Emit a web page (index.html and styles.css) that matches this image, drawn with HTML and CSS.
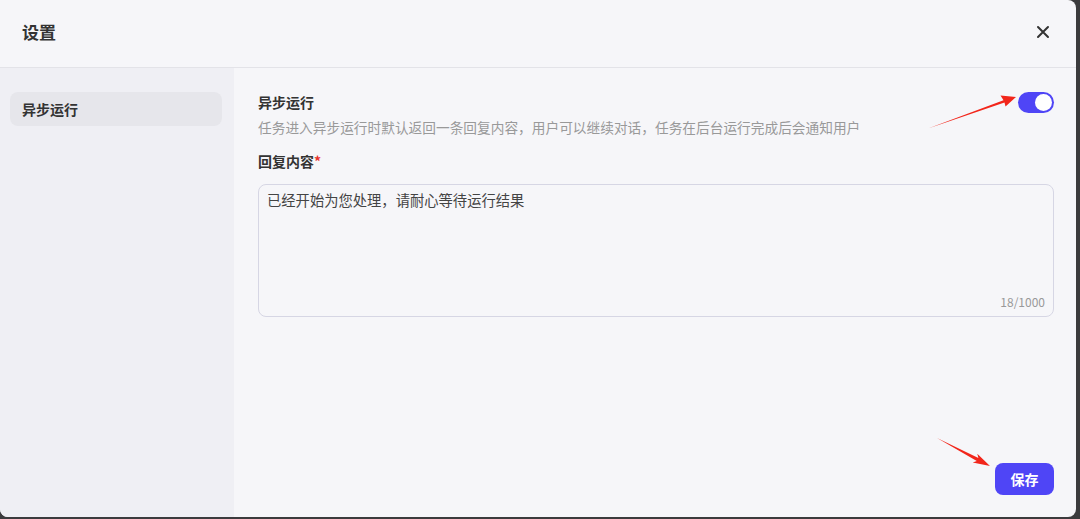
FILE: index.html
```html
<!DOCTYPE html>
<html lang="zh-CN">
<head>
<meta charset="utf-8">
<title>设置</title>
<link rel="stylesheet" href="styles.css">
</head>
<body>
<div class="dialog">
  <header class="dialog-header">
    <h1 class="dialog-title">设置</h1>
    <button class="close-btn" aria-label="关闭">
      <svg width="14" height="14" viewBox="0 0 14 14"><path d="M2 2L12 12M12 2L2 12" stroke="#333" stroke-width="2" stroke-linecap="round"/></svg>
    </button>
  </header>
  <div class="dialog-body">
    <aside class="sidebar">
      <div class="nav-item active">异步运行</div>
    </aside>
    <main class="content">
      <div class="setting-row">
        <div class="setting-text">
          <div class="setting-title">异步运行</div>
          <div class="setting-desc">任务进入异步运行时默认返回一条回复内容，用户可以继续对话，任务在后台运行完成后会通知用户</div>
        </div>
        <div class="switch on"><span class="knob"></span></div>
      </div>
      <div class="field-label">回复内容<span class="req">*</span></div>
      <div class="textarea">
        <div class="textarea-text">已经开始为您处理，请耐心等待运行结果</div>
        <div class="counter">18/1000</div>
      </div>
      <div class="footer">
        <button class="save-btn">保存</button>
      </div>
    </main>
  </div>
  <svg class="arrow arrow-1" width="100" height="45" viewBox="0 0 100 45">
    <polygon points="2,38.5 77.5,10.2 74.5,5.5 90,7 79.5,16.5 78.5,12.6" fill="#f2261b"/>
  </svg>
  <svg class="arrow arrow-2" width="60" height="36" viewBox="0 0 60 36">
    <polygon points="1,1 42.4,20.9 41.3,16.7 54,29 36.7,25.5 40.8,24.1" fill="#f2261b"/>
  </svg>
</div>
</body>
</html>
```

FILE: styles.css
```css
* { box-sizing: border-box; }
html, body { margin: 0; padding: 0; }
body {
  width: 1080px;
  height: 519px;
  background: #3b3b3d;
  font-family: "Noto Sans CJK SC", "Noto Sans", sans-serif;
  color: #333;
  overflow: hidden;
}
.dialog {
  position: relative;
  width: 1076px;
  height: 517px;
  background: #f6f6f9;
  border-radius: 0 8px 8px 8px;
  display: flex;
  flex-direction: column;
  overflow: hidden;
}
.dialog-header {
  height: 68px;
  flex: none;
  display: flex;
  align-items: center;
  justify-content: space-between;
  padding: 0 26px 4px 22px;
  border-bottom: 1px solid #e3e3e8;
}
.dialog-title {
  margin: 0;
  font-size: 17px;
  font-weight: 600;
  color: #333;
}
.close-btn {
  border: 0;
  background: none;
  padding: 0;
  width: 14px;
  height: 14px;
  display: flex;
}
.dialog-body {
  flex: 1;
  display: flex;
}
.sidebar {
  width: 234px;
  background: #efeff4;
  padding: 24px 12px 0 10px;
}
.nav-item {
  height: 34px;
  border-radius: 8px;
  background: #e6e6eb;
  font-size: 14px;
  font-weight: 600;
  padding-left: 12px;
  display: flex;
  align-items: center;
  color: #333;
}
.content {
  flex: 1;
  padding: 23px 22px 22px 24px;
  display: flex;
  flex-direction: column;
}
.setting-row {
  display: flex;
  justify-content: space-between;
  align-items: flex-start;
}
.setting-title {
  font-size: 14px;
  font-weight: 600;
  line-height: 22px;
}
.setting-desc {
  font-size: 13.7px;
  color: #999;
  line-height: 20px;
  margin-top: 4px;
}
.switch {
  width: 36px;
  height: 21px;
  border-radius: 11px;
  background: #4f45f6;
  position: relative;
  margin-top: 1px;
}
.switch .knob {
  position: absolute;
  right: 2px;
  top: 2px;
  width: 17px;
  height: 17px;
  border-radius: 50%;
  background: #fff;
}
.field-label {
  font-size: 14px;
  font-weight: 600;
  line-height: 22px;
  margin-top: 13px;
}
.req { color: #e8322d; }
.textarea {
  margin-top: 12px;
  height: 133px;
  border: 1px solid #d6d6e4;
  border-radius: 8px;
  padding: 5px 8px 5px 8px;
  display: flex;
  flex-direction: column;
  justify-content: space-between;
}
.textarea-text {
  font-size: 14.3px;
  line-height: 20px;
  color: #444;
}
.counter {
  align-self: flex-end;
  font-size: 12px;
  color: #999;
  line-height: 18px;
}
.footer {
  margin-top: auto;
  display: flex;
  justify-content: flex-end;
}
.save-btn {
  width: 59px;
  height: 32px;
  border: 0;
  border-radius: 8px;
  background: #4f45f6;
  color: #fff;
  font-family: inherit;
  font-size: 14px;
  font-weight: 600;
}
.arrow { position: absolute; }
.arrow-1 { left: 926px; top: 90px; }
.arrow-2 { left: 936px; top: 437px; }
```
